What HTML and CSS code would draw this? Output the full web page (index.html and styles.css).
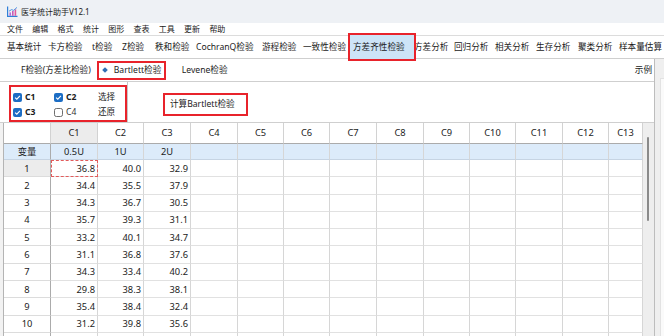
FILE: index.html
```html
<!DOCTYPE html>
<html lang="zh-CN">
<head>
<meta charset="utf-8">
<title>医学统计助手V12.1</title>
<link rel="stylesheet" href="styles.css">
</head>
<body>
<div class="app">
  <div class="titlebar">
    <svg class="appicon" width="11" height="11" viewBox="0 0 11 11">
      <path d="M0.6 0.5V10.4H10.5" stroke="#2f7fd8" stroke-width="1.2" fill="none"/>
      <rect x="2.4" y="6.4" width="1.6" height="3.4" fill="#b46ad8"/>
      <rect x="5" y="5" width="1.6" height="4.8" fill="#c85bb8"/>
      <rect x="7.6" y="3.4" width="1.6" height="6.4" fill="#e05a9c"/>
      <path d="M2 5.2L4.6 3.6L6.6 4.4L10 1.4" stroke="#3c8be0" stroke-width="0.9" fill="none"/>
    </svg>
    <span class="apptitle">医学统计助手V12.1</span>
  </div>
  <div class="menubar">
    <span>文件</span><span>编辑</span><span>格式</span><span>统计</span><span>图形</span><span>查表</span><span>工具</span><span>更新</span><span>帮助</span>
  </div>
  <div class="toolbar">
    <span class="tb">基本统计</span>
    <span class="tb">卡方检验</span>
    <span class="tb">t检验</span>
    <span class="tb">Z检验</span>
    <span class="tb">秩和检验</span>
    <span class="tb">CochranQ检验</span>
    <span class="tb">游程检验</span>
    <span class="tb">一致性检验</span>
    <span class="tb active"><span class="tbtext">方差齐性检验</span></span>
    <span class="tb">方差分析</span>
    <span class="tb">回归分析</span>
    <span class="tb">相关分析</span>
    <span class="tb">生存分析</span>
    <span class="tb">聚类分析</span>
    <span class="tb">样本量估算</span>
  </div>
  <div class="main">
    <div class="content">
      <div class="subtabs">
        <span class="st">F检验(方差比检验)</span>
        <span class="st st-active"><i class="diamond"></i>Bartlett检验</span>
        <span class="st st-lev">Levene检验</span>
        <span class="st st-example">示例</span>
      </div>
      <div class="options">
        <div class="checkgroup">
          <div class="checkbox-box">
            <label class="chk on"><svg class="cb" width="9" height="9" viewBox="0 0 9 9"><rect x="0" y="0" width="9" height="9" rx="2" fill="#1c6dc4"/><path d="M2.1 4.6L3.8 6.2L6.9 2.8" stroke="#fff" stroke-width="1.1" fill="none"/></svg><b>C1</b></label>
            <label class="chk on"><svg class="cb" width="9" height="9" viewBox="0 0 9 9"><rect x="0" y="0" width="9" height="9" rx="2" fill="#1c6dc4"/><path d="M2.1 4.6L3.8 6.2L6.9 2.8" stroke="#fff" stroke-width="1.1" fill="none"/></svg><b>C2</b></label>
            <span class="act">选择</span>
            <label class="chk on"><svg class="cb" width="9" height="9" viewBox="0 0 9 9"><rect x="0" y="0" width="9" height="9" rx="2" fill="#1c6dc4"/><path d="M2.1 4.6L3.8 6.2L6.9 2.8" stroke="#fff" stroke-width="1.1" fill="none"/></svg><b>C3</b></label>
            <label class="chk"><svg class="cb" width="9" height="9" viewBox="0 0 9 9"><rect x="0.5" y="0.5" width="8" height="8" rx="1.8" fill="#fff" stroke="#6e6e6e"/></svg><span class="off">C4</span></label>
            <span class="act">还原</span>
          </div>
        </div>
        <div class="actions">
          <span class="runbtn">计算Bartlett检验</span>
        </div>
      </div>
      <div class="gridwrap">
        <div class="sheet">
          <div class="c hd corner"></div><div class="c hd hsel">C1</div><div class="c hd">C2</div><div class="c hd">C3</div><div class="c hd">C4</div><div class="c hd">C5</div><div class="c hd">C6</div><div class="c hd">C7</div><div class="c hd">C8</div><div class="c hd">C9</div><div class="c hd">C10</div><div class="c hd">C11</div><div class="c hd">C12</div><div class="c hd">C13</div>

          <div class="c rh v">变量</div><div class="c v">0.5U</div><div class="c v">1U</div><div class="c v">2U</div><div class="c v"></div><div class="c v"></div><div class="c v"></div><div class="c v"></div><div class="c v"></div><div class="c v"></div><div class="c v"></div><div class="c v"></div><div class="c v"></div><div class="c v"></div>

          <div class="c rh rsel">1</div><div class="c n sel">36.8</div><div class="c n">40.0</div><div class="c n">32.9</div><div class="c"></div><div class="c"></div><div class="c"></div><div class="c"></div><div class="c"></div><div class="c"></div><div class="c"></div><div class="c"></div><div class="c"></div><div class="c"></div>

          <div class="c rh">2</div><div class="c n">34.4</div><div class="c n">35.5</div><div class="c n">37.9</div><div class="c"></div><div class="c"></div><div class="c"></div><div class="c"></div><div class="c"></div><div class="c"></div><div class="c"></div><div class="c"></div><div class="c"></div><div class="c"></div>

          <div class="c rh">3</div><div class="c n">34.3</div><div class="c n">36.7</div><div class="c n">30.5</div><div class="c"></div><div class="c"></div><div class="c"></div><div class="c"></div><div class="c"></div><div class="c"></div><div class="c"></div><div class="c"></div><div class="c"></div><div class="c"></div>

          <div class="c rh">4</div><div class="c n">35.7</div><div class="c n">39.3</div><div class="c n">31.1</div><div class="c"></div><div class="c"></div><div class="c"></div><div class="c"></div><div class="c"></div><div class="c"></div><div class="c"></div><div class="c"></div><div class="c"></div><div class="c"></div>

          <div class="c rh">5</div><div class="c n">33.2</div><div class="c n">40.1</div><div class="c n">34.7</div><div class="c"></div><div class="c"></div><div class="c"></div><div class="c"></div><div class="c"></div><div class="c"></div><div class="c"></div><div class="c"></div><div class="c"></div><div class="c"></div>

          <div class="c rh">6</div><div class="c n">31.1</div><div class="c n">36.8</div><div class="c n">37.6</div><div class="c"></div><div class="c"></div><div class="c"></div><div class="c"></div><div class="c"></div><div class="c"></div><div class="c"></div><div class="c"></div><div class="c"></div><div class="c"></div>

          <div class="c rh">7</div><div class="c n">34.3</div><div class="c n">33.4</div><div class="c n">40.2</div><div class="c"></div><div class="c"></div><div class="c"></div><div class="c"></div><div class="c"></div><div class="c"></div><div class="c"></div><div class="c"></div><div class="c"></div><div class="c"></div>

          <div class="c rh">8</div><div class="c n">29.8</div><div class="c n">38.3</div><div class="c n">38.1</div><div class="c"></div><div class="c"></div><div class="c"></div><div class="c"></div><div class="c"></div><div class="c"></div><div class="c"></div><div class="c"></div><div class="c"></div><div class="c"></div>

          <div class="c rh">9</div><div class="c n">35.4</div><div class="c n">38.4</div><div class="c n">32.4</div><div class="c"></div><div class="c"></div><div class="c"></div><div class="c"></div><div class="c"></div><div class="c"></div><div class="c"></div><div class="c"></div><div class="c"></div><div class="c"></div>

          <div class="c rh">10</div><div class="c n">31.2</div><div class="c n">39.8</div><div class="c n">35.6</div><div class="c"></div><div class="c"></div><div class="c"></div><div class="c"></div><div class="c"></div><div class="c"></div><div class="c"></div><div class="c"></div><div class="c"></div><div class="c"></div>

          <div class="c rh"></div><div class="c n"></div><div class="c n"></div><div class="c n"></div><div class="c"></div><div class="c"></div><div class="c"></div><div class="c"></div><div class="c"></div><div class="c"></div><div class="c"></div><div class="c"></div><div class="c"></div><div class="c"></div>
        </div>
        <div class="vscroll"><div class="thumb"></div></div>
      </div>
    </div>
    <div class="side"><div class="sidepanel"></div></div>
  </div>
</div>
</body>
</html>
```

FILE: styles.css
```css
* { box-sizing: border-box; }
html, body { margin: 0; padding: 0; }
body {
  width: 664px;
  height: 336px;
  overflow: hidden;
  background: #ffffff;
  font-family: "Noto Sans", "Noto Sans CJK SC", sans-serif;
  color: #1b1b1b;
}
.app {
  width: 664px;
  height: 336px;
  display: flex;
  flex-direction: column;
  overflow: hidden;
}

/* title bar */
.titlebar {
  height: 23px;
  flex: none;
  background: #eef1f5;
  display: flex;
  align-items: center;
  padding-left: 7px;
  gap: 3px;
}
.appicon { display: block; }
.apptitle { font-size: 8px; line-height: 1; color: #1a1a1a; }

/* menu bar */
.menubar {
  height: 13px;
  flex: none;
  display: flex;
  align-items: center;
  padding-left: 7px;
  border-bottom: 1px solid #dcdcdc;
  font-size: 8px;
  line-height: 1;
}
.menubar span { width: 25.3px; flex: none; }

/* toolbar */
.toolbar {
  height: 23px;
  flex: none;
  display: flex;
  align-items: center;
  padding-left: 7px;
  border-bottom: 1px solid #cfcfcf;
  font-size: 8.6px;
  line-height: 1;
  white-space: nowrap;
  position: relative;
  z-index: 2;
}
.tb { flex: none; }
.tb:nth-child(1) { width: 41px; }
.tb:nth-child(2) { width: 44px; }
.tb:nth-child(3) { width: 30px; }
.tb:nth-child(4) { width: 33px; }
.tb:nth-child(5) { width: 41px; }
.tb:nth-child(6) { width: 66px; }
.tb:nth-child(7) { width: 41px; }
.tb:nth-child(8) { width: 45px; }
.tb:nth-child(9) { width: 66px; }
.tb:nth-child(10) { width: 40px; }
.tb:nth-child(11) { width: 41px; }
.tb:nth-child(12) { width: 41px; }
.tb:nth-child(13) { width: 42px; }
.tb:nth-child(14) { width: 41px; }
.tb.active {
  position: relative;
  padding-left: 5px;
}
.tb.active::before {
  content: "";
  position: absolute;
  left: 0;
  width: 64px;
  top: -10px;
  bottom: -10px;
  background: #cde4f7;
  border: 2px solid #e8232b;
}
.tbtext { position: relative; }

/* main area */
.main {
  flex: 1;
  display: flex;
  min-height: 0;
}
.content {
  width: 655px;
  flex: none;
  border-right: 1px solid #bdbdbd;
  display: flex;
  flex-direction: column;
  min-height: 0;
}
.side {
  flex: 1;
  background: #efefef;
  padding-top: 19px;
  padding-left: 5px;
}
.sidepanel {
  height: 100%;
  background: #fafafa;
  border-left: 1px solid #e2e2e2;
  border-top: 1px solid #e2e2e2;
}

/* sub tabs */
.subtabs {
  height: 23px;
  flex: none;
  display: flex;
  align-items: center;
  padding-left: 21px;
  border-bottom: 1px solid #cfcfcf;
  font-size: 8.6px;
  line-height: 1;
  white-space: nowrap;
}
.st { flex: none; }
.st-active {
  margin-left: 6px;
  width: 69px;
  height: 19px;
  border: 2px solid #e8232b;
  display: flex;
  align-items: center;
  padding-left: 4px;
}
.diamond {
  display: block;
  width: 4px;
  height: 4px;
  background: #2f6fb5;
  transform: rotate(45deg);
  margin-right: 7px;
}
.st-lev { margin-left: 16px; }
.st-example { margin-left: auto; padding-right: 2px; }

/* options */
.options {
  height: 41px;
  flex: none;
  display: flex;
  border-bottom: 1px solid #cfcfcf;
}
.checkgroup {
  width: 128px;
  flex: none;
  border-right: 1px solid #c6c6c6;
  padding-top: 3px;
  padding-left: 9px;
}
.checkbox-box {
  width: 118px;
  height: 37px;
  border: 2px solid #e8232b;
  padding: 3px 0 0 2px;
  display: grid;
  grid-template-columns: 41px 44px auto;
  grid-template-rows: 15px 15px;
  align-items: center;
  font-size: 8.6px;
  line-height: 1;
}
.chk {
  display: flex;
  align-items: center;
  gap: 3px;
}
.cb { display: block; flex: none; }
.chk b { font-weight: 700; }
.chk .off { color: #333; }
.actions {
  flex: 1;
  padding-left: 35px;
  padding-top: 11px;
}
.runbtn {
  display: flex;
  align-items: center;
  width: 85px;
  height: 23px;
  border: 2px solid #e8232b;
  padding-left: 5px;
  font-size: 8.6px;
  line-height: 1;
  white-space: nowrap;
}

/* grid */
.gridwrap {
  flex: 1;
  min-height: 0;
  display: flex;
  overflow: hidden;
  padding-left: 3px;
  background: #f2f2f2;
}
.sheet {
  flex: none;
  display: grid;
  grid-template-columns: 47px 47px 46px 47px 47px 46px 46px 47px 47px 46px 46px 47px 46px 34px;
  grid-template-rows: 21px 16px repeat(11, 17.3px);
  border-left: 1px solid #b4b4b4;
  background: #fff;
  font-size: 9.3px;
  line-height: 1;
}
.c {
  display: flex;
  align-items: center;
  justify-content: center;
  border-right: 1px solid #d6d6d6;
  border-bottom: 1px solid #e1e1e1;
  white-space: nowrap;
  overflow: hidden;
}
.hd {
  background: #fff;
  border-bottom: 1px solid #ababab;
  border-right: 1px solid #d2d2d2;
  color: #222;
}
.hd.hsel { background: #ececec; }
.rh {
  border-right: 1px solid #ababab;
  border-bottom: 1px solid #dcdcdc;
}
.rh.rsel { background: #ececec; }
.v {
  background: #dcebfa;
  border-bottom: 1px solid #c6d4e3;
}
.n {
  justify-content: flex-end;
  padding-right: 2px;
}
.sel {
  outline: 1px dashed #e25b5b;
  outline-offset: -1px;
}
.vscroll {
  width: 11px;
  flex: none;
  background: #eeeeee;
  padding-top: 14px;
  padding-left: 4px;
}
.thumb {
  width: 2px;
  height: 84px;
  border-radius: 1px;
  background: #8a8a8a;
}
```
